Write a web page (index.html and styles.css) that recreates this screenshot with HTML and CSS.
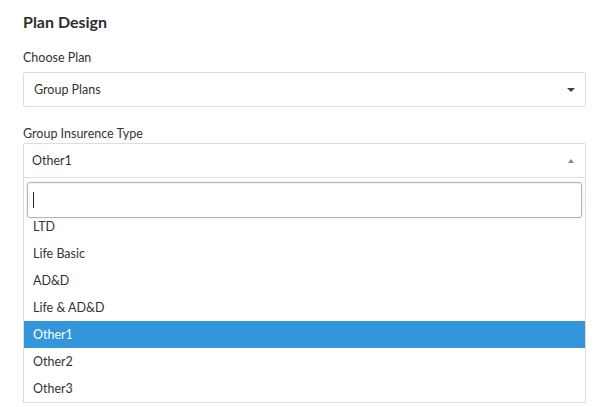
FILE: index.html
```html
<!DOCTYPE html>
<html>
<head>
<meta charset="utf-8">
<link rel="stylesheet" href="styles.css">
</head>
<body>
<div class="page">
  <h2 class="title">Plan Design</h2>
  <div class="field">
    <label class="label">Choose Plan</label>
    <div class="select">
      <span class="value">Group Plans</span>
      <span class="arrow-down"></span>
    </div>
  </div>
  <div class="field field-2">
    <label class="label label-tight">Group Insurence Type</label>
    <div class="select select-open">
      <span class="value">Other1</span>
      <span class="arrow-up"></span>
    </div>
    <div class="dropdown">
      <div class="search-wrap">
        <div class="search"><span class="caret"></span></div>
      </div>
      <div class="results">
        <ul class="list">
          <li class="item item-partial">LTD</li>
          <li class="item">Life Basic</li>
          <li class="item">AD&amp;D</li>
          <li class="item">Life &amp; AD&amp;D</li>
          <li class="item item-active">Other1</li>
          <li class="item">Other2</li>
          <li class="item">Other3</li>
        </ul>
      </div>
    </div>
  </div>
</div>
</body>
</html>
```

FILE: styles.css
```css
html, body {
  margin: 0;
  padding: 0;
  background: #fff;
}
body {
  font-family: "Lato", "Open Sans", sans-serif;
  color: #333;
}
.page {
  width: 563px;
  padding: 13px 0 0 23px;
}
.title {
  margin: 0;
  font-size: 16px;
  font-weight: 700;
  line-height: 18px;
  color: #2e2e2e;
}
.field {
  margin-top: 19px;
}
.field-2 {
  margin-top: 19px;
}
.label {
  display: block;
  font-size: 12.5px;
  line-height: 16px;
  color: #333;
  margin-bottom: 6px;
}
.label-tight {
  margin-bottom: 1px;
}
.select {
  box-sizing: border-box;
  height: 35px;
  border: 1px solid #ddd;
  border-radius: 2px;
  display: flex;
  align-items: center;
  justify-content: space-between;
  padding: 0 10px 0 10px;
  font-size: 12.5px;
}
.select-open {
  padding-left: 8px;
  border-radius: 2px 2px 0 0;
}
.value {
  color: #333;
}
.arrow-down {
  width: 0;
  height: 0;
  border-left: 4px solid transparent;
  border-right: 4px solid transparent;
  border-top: 4px solid #444;
}
.arrow-up {
  width: 0;
  height: 0;
  border-left: 3px solid transparent;
  border-right: 3px solid transparent;
  border-bottom: 4px solid #888;
  margin-right: 1px;
}
.dropdown {
  border: 1px solid #ddd;
  border-top: none;
}
.search-wrap {
  padding: 4px 3px 3px 3px;
}
.search {
  box-sizing: border-box;
  height: 36px;
  border: 1px solid #a9b6c4;
  border-radius: 3px;
  box-shadow: 0 0 2px rgba(80, 140, 200, 0.35), inset 0 1px 1px rgba(0,0,0,0.05);
  display: flex;
  align-items: center;
  padding-left: 5px;
}
.caret {
  width: 1px;
  height: 16px;
  background: #222;
}
.results {
  height: 181px;
}
.list {
  list-style: none;
  margin: 0;
  padding: 0;
}
.item {
  height: 27px;
  line-height: 27px;
  padding-left: 9px;
  font-size: 12.5px;
  color: #333;
}
.item-partial {
  height: 19px;
  line-height: 11px;
}
.item-active {
  background: #3396dd;
  color: #fff;
}
```
